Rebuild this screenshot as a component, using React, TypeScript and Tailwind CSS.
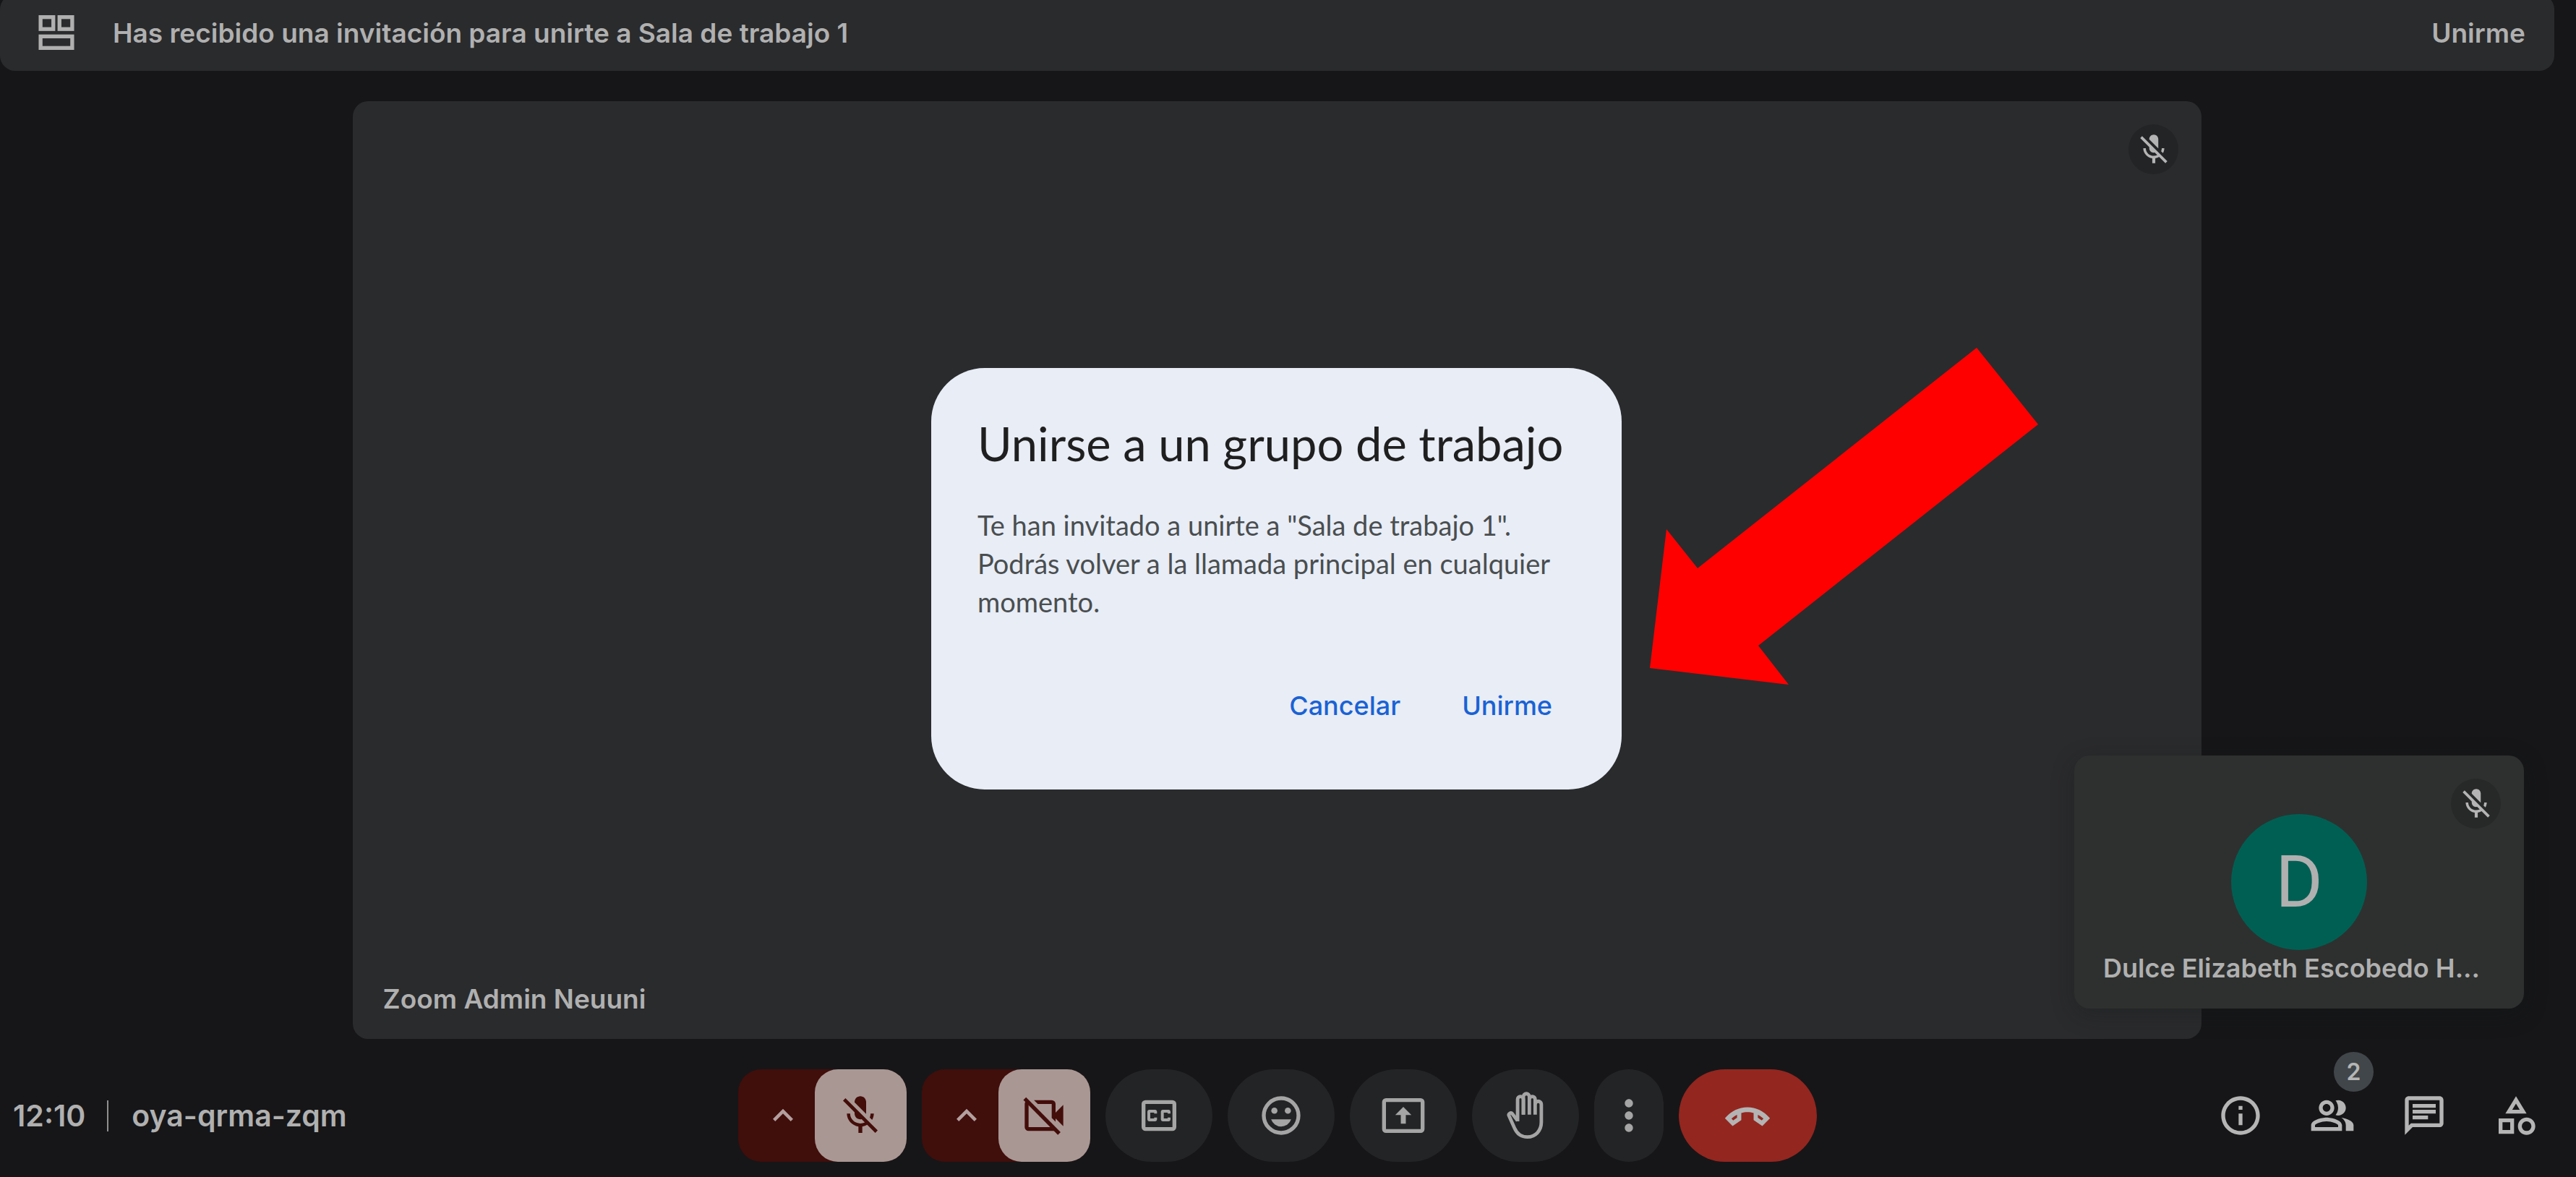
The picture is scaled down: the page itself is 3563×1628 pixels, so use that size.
import type { ReactNode } from 'react';
import {
  MdKeyboardArrowUp,
  MdMicOff,
  MdMoreVert,
  MdOutlineCategory,
  MdOutlineChat,
  MdOutlineInfo,
  MdOutlinePeopleAlt,
} from 'react-icons/md';

type GlyphProps = { children: ReactNode };

function Glyph({ children }: GlyphProps) {
  return (
    <svg viewBox="0 0 24 24" className="size-16 overflow-visible" fill="currentColor" aria-hidden="true">
      {children}
    </svg>
  );
}

function RoomsIcon() {
  return (
    <Glyph>
      <g fill="none" stroke="currentColor" strokeWidth="2">
        <rect x="3.8" y="4" width="6.6" height="6.2" />
        <rect x="13.6" y="4" width="6.6" height="6.2" />
        <rect x="3.8" y="14" width="16.4" height="6" />
      </g>
    </Glyph>
  );
}

function CameraOffIcon() {
  return (
    <Glyph>
      <path d="M1.3 3.9 2.7 2.5 20.6 20.6 19.2 22z" />
      <path d="M6.8 4H16a2 2 0 0 1 2 2v4.5l4-4v11l-4-4v1.7l-2-2V6H8.8z" />
      <path d="M2.6 4.6 4 6V18h12l2 2H4a2 2 0 0 1-2-2V6c0-.6.2-1 .6-1.4z" />
    </Glyph>
  );
}

function CaptionsIcon() {
  return (
    <Glyph>
      <rect x="4" y="5" width="16" height="14" rx="1" fill="none" stroke="currentColor" strokeWidth="2" />
      <path d="M11 11H9.5v-.5h-2v3h2V13H11v1c0 .55-.45 1-1 1H7c-.55 0-1-.45-1-1v-4c0-.55.45-1 1-1h3c.55 0 1 .45 1 1v1z" />
      <path d="M18 11h-1.5v-.5h-2v3h2V13H18v1c0 .55-.45 1-1 1h-3c-.55 0-1-.45-1-1v-4c0-.55.45-1 1-1h3c.55 0 1 .45 1 1v1z" />
    </Glyph>
  );
}

function SmileIcon() {
  return (
    <Glyph>
      <circle cx="12" cy="12" r="9" fill="none" stroke="currentColor" strokeWidth="2" />
      <circle cx="8.5" cy="9.5" r="1.6" />
      <circle cx="15.5" cy="9.5" r="1.6" />
      <path d="M6.8 14h10.4a5.5 5.5 0 0 1-10.4 0z" />
    </Glyph>
  );
}

function PresentIcon() {
  return (
    <Glyph>
      <rect x="2" y="4" width="20" height="16" rx="1" fill="none" stroke="currentColor" strokeWidth="2" />
      <path d="M12 7.5l4.2 4.2h-2.9v4.5h-2.6v-4.5H7.8z" />
    </Glyph>
  );
}

function HandIcon() {
  return (
    <Glyph>
      <g fill="none" stroke="currentColor" strokeWidth="1.8">
        <path d="M7.9 15V3.6a1.5 1.5 0 0 1 3 0v7.9" />
        <path d="M10.9 11.5V2.2a1.55 1.55 0 0 1 3.1 0v9.3" />
        <path d="M14 3.6a1.5 1.5 0 0 1 3 0v7.9" />
        <path d="M17 6.2a1.6 1.6 0 0 1 3.2 0v9.3c0 4.3-3 7.6-7.2 7.6-3 0-5.4-1.6-6.7-4.6L3.4 12c-.4-1 .9-1.7 1.7-1l2.8 3.6" />
      </g>
    </Glyph>
  );
}

function HangUpIcon() {
  return (
    <Glyph>
      <path
        fillRule="evenodd"
        d="M12 7.7c4.4 0 8.4 1.9 11.7 5.7l-4 4-4.5-3.1v-3.6c-1-.3-2.1-.5-3.2-.5s-2.2.2-3.2.5v3.6l-4.5 3.1-4-4C3.6 9.6 7.6 7.7 12 7.7zM6.6 11.6c-1 .5-2 1.2-2.9 2l.9.9 2-1.4zM17.4 11.6v1.5l2 1.4.9-.9c-.9-.8-1.9-1.5-2.9-2z"
      />
    </Glyph>
  );
}

function MutedBadge({ tone }: { tone: string }) {
  return (
    <span
      role="img"
      aria-label="Micrófono desactivado"
      className={`absolute right-8 top-8 flex size-[69px] items-center justify-center rounded-full text-[#b4b4b4] ${tone}`}
    >
      <MdMicOff className="size-[50px]" />
    </span>
  );
}

function DeviceControl({ name, children }: { name: string; children: ReactNode }) {
  return (
    <div className="flex h-32 rounded-[32px] bg-[#400e0b]">
      <button type="button" aria-label={`Ajustes de ${name}`} className="w-[106px] pl-[34px] text-[#b3a09e]">
        <MdKeyboardArrowUp className="size-14" />
      </button>
      <button
        type="button"
        aria-label={`Activar ${name}`}
        className="flex w-[127px] items-center justify-center rounded-[32px] bg-[#a99794] text-[#430d0a]"
      >
        {children}
      </button>
    </div>
  );
}

function RoundControl({ label, shape, children }: { label: string; shape: string; children: ReactNode }) {
  return (
    <button type="button" aria-label={label} className={`flex h-32 items-center justify-center rounded-full ${shape}`}>
      {children}
    </button>
  );
}

function PanelButton({ label, badge, children }: { label: string; badge?: string; children: ReactNode }) {
  return (
    <button
      type="button"
      aria-label={label}
      className="relative flex h-32 w-[127px] items-center justify-center text-[#b5b5b5]"
    >
      {children}
      {badge && (
        <span className="absolute -top-6 right-1.5 flex size-[55px] items-center justify-center rounded-full bg-[#41464a] text-[32px] leading-none">
          {badge}
        </span>
      )}
    </button>
  );
}

const grey = 'w-[148px] bg-[#232426] text-[#a5a5a5]';

export default function App() {
  return (
    <div className="relative flex min-h-screen flex-col overflow-hidden bg-[#161618] pr-[30px] font-['Inter',sans-serif] text-[37px] leading-[53px] font-semibold text-[#b0b0b0]">
      <header className="-mt-2 flex h-[106px] items-center rounded-[21px] bg-[#2a2b2d] pr-10 pl-[46px]">
        <RoomsIcon />
        <p className="ml-[46px] flex-1">Has recibido una invitación para unirte a Sala de trabajo 1</p>
        <button type="button">Unirme</button>
      </header>

      <main className="relative flex flex-1 pt-[42px]">
        <section className="relative mx-[13.8%] flex flex-1 items-end rounded-[21px] bg-[#2a2b2d] px-[42px] pb-[29px]">
          <MutedBadge tone="bg-[#232426]" />
          <p>Zoom Admin Neuuni</p>
        </section>

        <section className="absolute right-[42px] bottom-[42px] flex h-[350px] w-[622px] items-center justify-center rounded-[21px] bg-[#2e302f] shadow-[0_8px_32px_rgba(18,22,24,0.3)]">
          <MutedBadge tone="bg-[#272928]" />
          <div className="flex size-[188px] items-center justify-center rounded-full bg-[#005f53] font-['Roboto',sans-serif] text-[100px] leading-none font-normal">
            D
          </div>
          <p className="absolute inset-x-10 bottom-[29px] text-[36px] whitespace-nowrap">
            Dulce Elizabeth Escobedo H...
          </p>
        </section>
      </main>

      <footer className="grid grid-cols-[1fr_auto_1fr] items-center pt-[42px] pb-[21px]">
        <div className="flex items-center pl-[18px] text-[41px]">
          <time>12:10</time>
          <span className="mr-8 ml-[30px] h-[43px] w-0.5 bg-[#8f8f90]" />
          <span>oya-qrma-zqm</span>
        </div>

        <div className="flex gap-[21px]">
          <DeviceControl name="micrófono">
            <MdMicOff className="size-16" />
          </DeviceControl>
          <DeviceControl name="cámara">
            <CameraOffIcon />
          </DeviceControl>
          <RoundControl label="Subtítulos" shape={grey}>
            <CaptionsIcon />
          </RoundControl>
          <RoundControl label="Enviar una reacción" shape={grey}>
            <SmileIcon />
          </RoundControl>
          <RoundControl label="Presentar ahora" shape={grey}>
            <PresentIcon />
          </RoundControl>
          <RoundControl label="Levantar la mano" shape={grey}>
            <HandIcon />
          </RoundControl>
          <RoundControl label="Más opciones" shape="w-24 bg-[#232426] text-[#a5a5a5]">
            <MdMoreVert className="size-[68px]" />
          </RoundControl>
          <RoundControl label="Abandonar la llamada" shape="w-[191px] bg-[#93261f] text-[#b4b4b4]">
            <HangUpIcon />
          </RoundControl>
        </div>

        <div className="-mr-2.5 flex justify-end">
          <PanelButton label="Detalles de la reunión">
            <MdOutlineInfo className="size-16" />
          </PanelButton>
          <PanelButton label="Personas" badge="2">
            <MdOutlinePeopleAlt className="size-16" />
          </PanelButton>
          <PanelButton label="Chat">
            <MdOutlineChat className="size-16" />
          </PanelButton>
          <PanelButton label="Actividades">
            <MdOutlineCategory className="size-16" />
          </PanelButton>
        </div>
      </footer>

      <div className="absolute inset-0 flex items-center justify-center pr-8 pb-[27px]">
        <div
          role="dialog"
          aria-labelledby="dialog-title"
          className="relative w-[955px] rounded-[74px] bg-[#e8edf6] px-16 pt-[62px] pb-[89px]"
        >
          <h1 id="dialog-title" className="font-['Lato',sans-serif] text-[65px] leading-[84px] font-normal text-[#1f1f1f]">
            Unirse a un grupo de trabajo
          </h1>
          <p className="mt-[45px] font-['Lato',sans-serif] text-[38px] font-normal text-[#4a4e50]">
            Te han invitado a unirte a "Sala de trabajo 1". Podrás volver a la llamada principal en cualquier momento.
          </p>
          <div className="mt-[91px] flex justify-end gap-[21px] text-[36px] font-medium text-[#1a62d4]">
            <button type="button" className="px-8">
              Cancelar
            </button>
            <button type="button" className="px-8">
              Unirme
            </button>
          </div>
          <svg
            viewBox="0 0 537 466"
            className="absolute -top-7 left-full ml-[39px] h-[466px] w-[537px]"
            fill="#ff0000"
            aria-hidden="true"
          >
            <path d="M452 0 537 106 150 412 192 466 0 443 23 251 66 305z" />
          </svg>
        </div>
      </div>
    </div>
  );
}
